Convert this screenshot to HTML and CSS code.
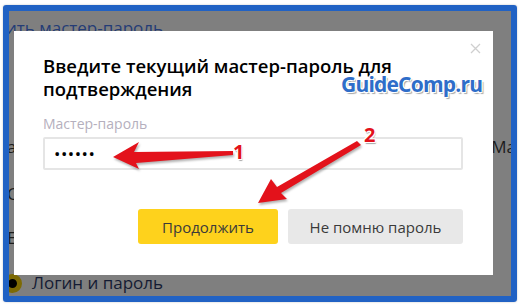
FILE: index.html
```html
<!DOCTYPE html>
<html lang="ru">
<head>
    <meta charset="UTF-8">
    <title>Мастер-пароль</title>
    <link rel="stylesheet" href="styles.css">
</head>
<body>
    <div class="frame">
        <div class="screen">
            <div class="page">
                <p class="line link">ить мастер-пароль</p>
                <div class="line split">
                    <span class="cut">а</span>
                    <span class="tail">Мастер-пароль</span>
                </div>
                <p class="line cut c2">С</p>
                <p class="line cut c3">Е</p>
                <div class="line radio-row">
                    <span class="radio"></span>
                    <span>Логин и пароль</span>
                </div>
            </div>

            <div class="dialog">
                <svg class="close" width="11" height="11" viewBox="0 0 11 11">
                    <path d="M1 1 L10 10 M10 1 L1 10" stroke="#cfcfcf" stroke-width="1.3" fill="none"/>
                </svg>
                <h2 class="dialog-title">Введите текущий мастер-пароль для подтверждения</h2>
                <label class="field-label" for="master">Мастер-пароль</label>
                <div class="field" id="master">••••••</div>
                <div class="actions">
                    <button class="btn btn-primary">Продолжить</button>
                    <button class="btn btn-secondary">Не помню пароль</button>
                </div>
            </div>
        </div>
    </div>

    <!-- annotations drawn on top of the screenshot -->
    <div class="watermark">GuideComp.ru</div>
    <svg class="arrows" width="522" height="306" viewBox="0 0 522 306">
        <polygon points="113,157 139,142 134,152 233,151 233,155 136,163 139,169" fill="#e3121b"/>
        <polygon points="258,203 271,179 277,187 357,141 361,145 281,193 287,199" fill="#e3121b"/>
    </svg>
    <span class="num n1">1</span>
    <span class="num n2">2</span>
</body>
</html>
```

FILE: styles.css
```css
:root {
    --frame-blue: #2162c4;
    --dim: #7f7f7f;
    --yellow: #fed21c;
}

* {
    box-sizing: border-box;
    margin: 0;
    padding: 0;
}

body {
    width: 522px;
    height: 306px;
    background-color: #ffffff;
    font-family: 'Open Sans', 'Noto Sans', sans-serif;
    position: relative;
    overflow: hidden;
}

.frame {
    margin: 5px 0 0 3px;
    width: 514px;
    height: 297px;
    border: 6px solid var(--frame-blue);
    border-radius: 3px;
    box-shadow: 0 0 2px rgba(0, 0, 0, 0.25);
}

.screen {
    position: relative;
    width: 100%;
    height: 100%;
    background-color: var(--dim);
    overflow: hidden;
}

/* dimmed page behind the dialog */
.page {
    padding-top: 6px;
    font-size: 17px;
    color: #1c1c1c;
}

.line {
    height: 22px;
    line-height: 22px;
    white-space: nowrap;
}

.link {
    margin-left: -3px;
    color: #243c76;
}

.split {
    margin-top: 97px;
    display: flex;
    justify-content: space-between;
    overflow: hidden;
}

.cut {
    margin-left: -2px;
}

.tail {
    margin-right: -107px;
}

.c2 {
    margin-top: 25px;
}

.c3 {
    margin-top: 22px;
}

.radio-row {
    margin-top: 23px;
    display: flex;
    align-items: center;
    gap: 10px;
    color: #141b33;
    margin-left: -6px;
}

.radio {
    width: 19px;
    height: 19px;
    border-radius: 50%;
    background-color: #000;
    border: 5px solid #7d6a04;
}

/* dialog */
.dialog {
    position: absolute;
    left: 5px;
    top: 20px;
    width: 479px;
    height: 244px;
    background-color: #ffffff;
    padding: 23px 30px 29px 29px;
}

.close {
    position: absolute;
    top: 12px;
    right: 12px;
}

.dialog-title {
    font-size: 18.5px;
    line-height: 23px;
    font-weight: 600;
    color: #000;
    width: 370px;
}

.field-label {
    display: block;
    margin-top: 15px;
    font-size: 14px;
    line-height: 18px;
    color: #b5afbd;
}

.field {
    margin-top: 4px;
    height: 33px;
    border: 2px solid #e5e5e5;
    border-radius: 2px;
    padding-left: 9px;
    font-size: 17px;
    line-height: 29px;
    letter-spacing: 0.5px;
    color: #000;
}

.actions {
    margin-top: 39px;
    display: flex;
    justify-content: flex-end;
    gap: 10px;
}

.btn {
    height: 35px;
    border: none;
    border-radius: 3px;
    font-family: 'Open Sans', 'Noto Sans', sans-serif;
    font-size: 15px;
    color: #3a3a3a;
}

.btn-primary {
    width: 140px;
    background-color: var(--yellow);
}

.btn-secondary {
    width: 175px;
    background-color: #e8e8e8;
}

/* annotations */
.watermark {
    position: absolute;
    left: 341px;
    top: 70px;
    font-size: 21px;
    letter-spacing: -0.8px;
    font-weight: 700;
    color: #2e6dc9;
    text-shadow: -1px -1px 0 #fff, 1px -1px 0 #fff, -1px 1px 0 #fff, 1px 1px 0 #fff, 2px 2px 1px rgba(0, 0, 0, 0.35);
}

.arrows {
    position: absolute;
    left: 0;
    top: 0;
    filter: drop-shadow(1px 2px 1px rgba(0, 0, 0, 0.3));
}

.num {
    position: absolute;
    font-size: 20px;
    font-weight: 700;
    line-height: 20px;
    color: #e3121b;
    text-shadow: -1px -1px 0 #fff, 1px -1px 0 #fff, -1px 1px 0 #fff, 1px 1px 0 #fff, 1px 2px 1px rgba(0, 0, 0, 0.35);
}

.n1 {
    left: 233px;
    top: 142px;
}

.n2 {
    left: 364px;
    top: 125px;
}
```
